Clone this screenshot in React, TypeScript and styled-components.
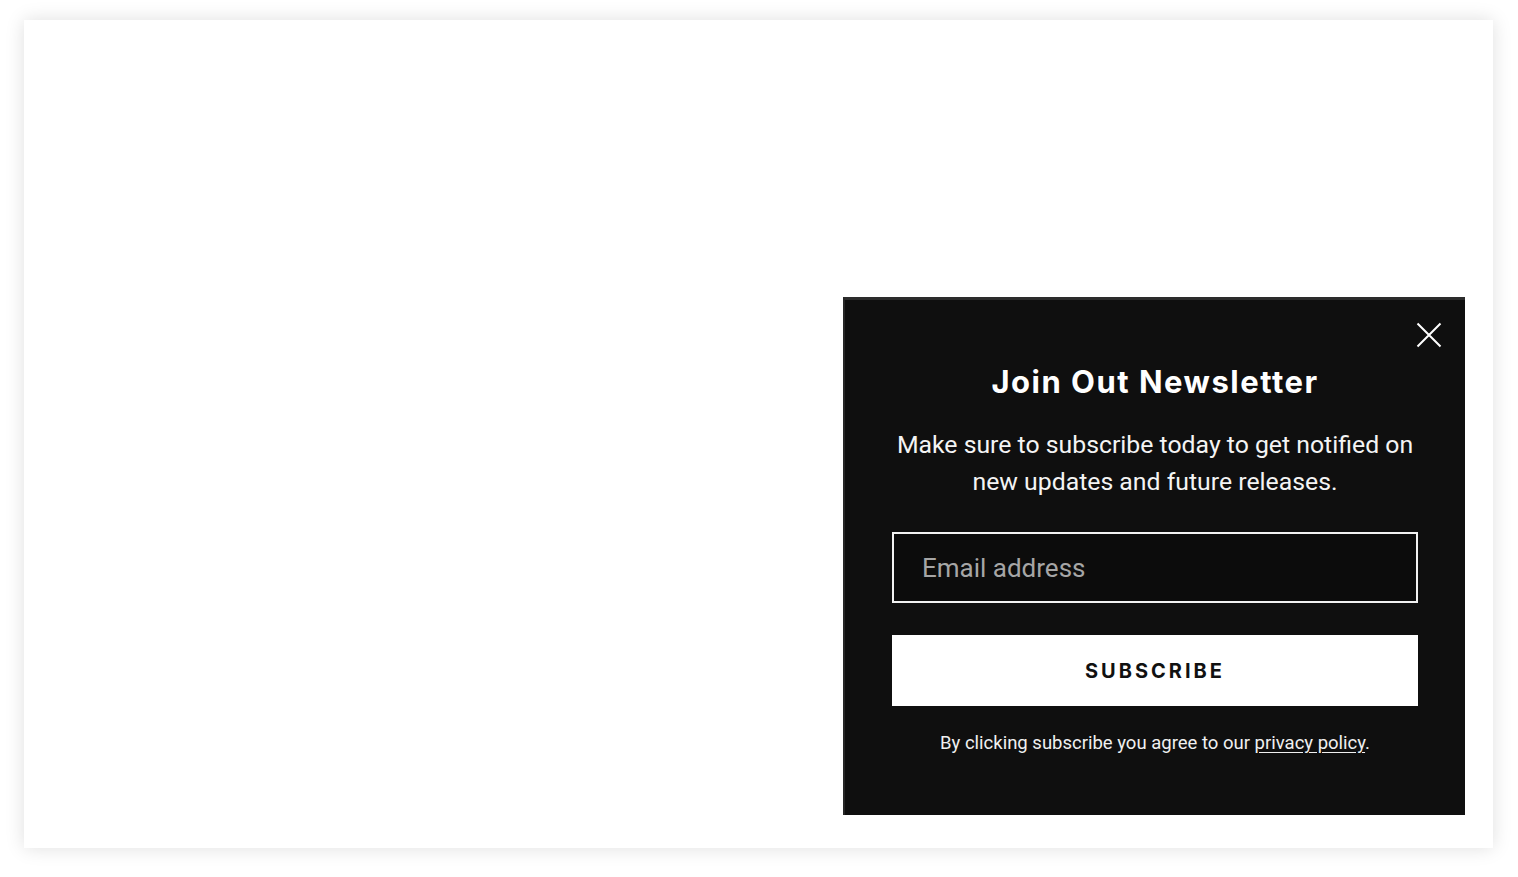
import React from "react";
import styled, { createGlobalStyle } from "styled-components";

const Global = createGlobalStyle`
  html, body { margin: 0; padding: 0; background: #ffffff; }
  body { font-family: Roboto, "Noto Sans", Arial, sans-serif; }
  * { box-sizing: border-box; }
`;

const Page = styled.div`
  width: 1518px;
  height: 877px;
  padding: 20px 25px 29px 24px;
  background: #ffffff;
`;

const Card = styled.div`
  width: 100%;
  height: 100%;
  background: #ffffff;
  box-shadow: 0 0 18px rgba(0, 0, 0, 0.13);
  display: flex;
  justify-content: flex-end;
  align-items: flex-end;
  padding: 0 28px 33px 0;
`;

const Popup = styled.div`
  position: relative;
  width: 622px;
  height: 518px;
  background: #0f0f0f;
  border-top: 3px solid #2c2c2c;
  border-left: 2px solid #262626;
  padding: 62px 47px 0 47px;
  display: flex;
  flex-direction: column;
  align-items: center;
  color: #ffffff;
`;

const Close = styled.button`
  position: absolute;
  top: 20px;
  right: 21px;
  width: 30px;
  height: 30px;
  padding: 0;
  border: 0;
  background: transparent;
  cursor: pointer;
  display: flex;
  align-items: center;
  justify-content: center;
`;

const Title = styled.h2`
  margin: 0;
  font-family: Inter, "Open Sans", sans-serif;
  font-weight: 700;
  font-size: 31px;
  line-height: 40px;
  letter-spacing: 1.5px;
  text-align: center;
`;

const Lead = styled.p`
  margin: 24px 0 0;
  font-family: Roboto, sans-serif;
  font-size: 24.8px;
  line-height: 37px;
  text-align: center;
  color: #f4f4f4;
`;

const Form = styled.form`
  width: 100%;
  margin-top: 32px;
  display: flex;
  flex-direction: column;
  gap: 32px;
`;

const Input = styled.input`
  width: 100%;
  height: 71px;
  background: #0c0c0c;
  border: 2px solid #f2f2f2;
  padding: 0 28px;
  font-family: Roboto, sans-serif;
  font-size: 26px;
  color: #ffffff;
  outline: none;
  &::placeholder { color: #a6a6a6; }
`;

const Button = styled.button`
  width: 100%;
  height: 71px;
  background: #ffffff;
  border: 0;
  font-family: Inter, "Open Sans", sans-serif;
  font-weight: 700;
  font-size: 20px;
  letter-spacing: 3px;
  color: #111111;
  cursor: pointer;
`;

const Note = styled.p`
  margin: 26px 0 0;
  font-family: Roboto, sans-serif;
  font-size: 18.5px;
  line-height: 22px;
  color: #f0f0f0;
  text-align: center;
`;

const Link = styled.a`
  color: #f0f0f0;
  text-decoration: underline;
  text-underline-offset: 3px;
`;

export default function App() {
  return (
    <>
      <Global />
      <Page>
        <Card>
          <Popup>
            <Close aria-label="Close">
              <svg width="26" height="26" viewBox="0 0 26 26" fill="none">
                <path d="M1.5 1.5 L24.5 24.5 M24.5 1.5 L1.5 24.5" stroke="#ffffff" strokeWidth="2" />
              </svg>
            </Close>
            <Title>Join Out Newsletter</Title>
            <Lead>
              Make sure to subscribe today to get notified on
              <br />
              new updates and future releases.
            </Lead>
            <Form onSubmit={(e) => e.preventDefault()}>
              <Input type="email" placeholder="Email address" />
              <Button type="submit">SUBSCRIBE</Button>
            </Form>
            <Note>
              By clicking subscribe you agree to our <Link href="#">privacy policy</Link>.
            </Note>
          </Popup>
        </Card>
      </Page>
    </>
  );
}
